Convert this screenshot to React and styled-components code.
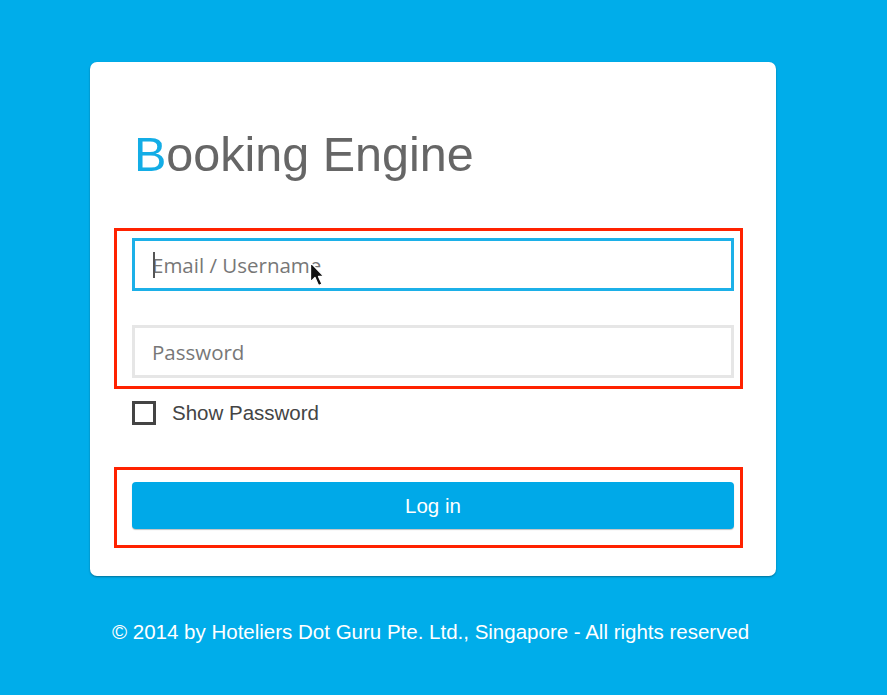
import React, { useState } from 'react';
import styled, { createGlobalStyle } from 'styled-components';

const GlobalStyle = createGlobalStyle`
  html, body {
    margin: 0;
    padding: 0;
    background: #00adea;
  }
  body {
    font-family: "Liberation Sans", Arial, sans-serif;
  }
`;

const Page = styled.div`
  width: 887px;
  height: 695px;
  padding-top: 62px;
  box-sizing: border-box;
  background: #00adea;
  overflow: hidden;
`;

const Card = styled.div`
  width: 686px;
  height: 514px;
  margin-left: 90px;
  box-sizing: border-box;
  padding: 0 43px 0 42px;
  background: #fff;
  border-radius: 7px;
  box-shadow: 0 1px 2px rgba(0, 0, 0, 0.35);
  display: flex;
  flex-direction: column;
`;

const Title = styled.h1`
  margin: 64px 0 0 2px;
  font-size: 48.5px;
  line-height: 56px;
  font-weight: normal;
  color: #666;
  span {
    color: #13ade6;
  }
`;

const Marker = styled.div`
  margin: ${p => p.$top}px -10px 0 -18px;
  border: 3px solid #ff2200;
  padding: ${p => p.$pad};
  display: flex;
  flex-direction: column;
  gap: ${p => p.$gap || 0}px;
`;

const Field = styled.div`
  position: relative;
  height: 53px;
  box-sizing: border-box;
  border: 3px solid ${p => (p.$focused ? '#1cb0e8' : '#e6e6e6')};
  display: flex;
  align-items: center;
  padding-left: 17px;
`;

const Input = styled.input`
  border: none;
  outline: none;
  background: transparent;
  width: 100%;
  height: 100%;
  padding: 0;
  font-family: "Open Sans", sans-serif;
  font-size: 20.5px;
  color: #333;
  caret-color: #333;
  &::placeholder {
    color: #777;
  }
`;

const Caret = styled.span`
  position: absolute;
  left: 18px;
  top: 11px;
  width: 2px;
  height: 26px;
  background: #555;
`;

const Pointer = styled.svg`
  position: absolute;
  left: 174px;
  top: 20px;
  width: 16px;
  height: 27px;
`;

const CheckRow = styled.label`
  display: flex;
  align-items: center;
  gap: 16px;
  margin-top: 12px;
  font-size: 20.5px;
  color: #444;
  cursor: pointer;
`;

const Box = styled.span`
  width: 24px;
  height: 24px;
  box-sizing: border-box;
  border: 3px solid #444;
  display: inline-flex;
  align-items: center;
  justify-content: center;
  font-size: 16px;
  line-height: 1;
`;

const Button = styled.button`
  height: 47px;
  border: none;
  border-radius: 4px;
  background: #00a9e8;
  box-shadow: 0 1px 1px rgba(0, 0, 0, 0.25);
  color: #fff;
  font-family: "Liberation Sans", Arial, sans-serif;
  font-size: 20.5px;
  cursor: pointer;
`;

const Footer = styled.p`
  margin: 44px 0 0 112px;
  font-size: 20.5px;
  color: #fff;
`;

export default function App() {
  const [show, setShow] = useState(false);
  return (
    <Page>
      <GlobalStyle />
      <Card>
        <Title>
          <span>B</span>ooking Engine
        </Title>
        <Marker $top={46} $pad="7px 6px 8px 15px" $gap={34}>
          <Field $focused>
            <Caret />
            <Input type="text" placeholder="Email / Username" />
            <Pointer viewBox="0 0 16 27">
              <path
                d="M1.5 1.5 L1.5 21 L6 16.5 L9.5 24.5 L13 23 L9.5 15.5 L15 15.5 Z"
                fill="#111"
                stroke="#fff"
                strokeWidth="1.3"
                strokeLinejoin="round"
              />
            </Pointer>
          </Field>
          <Field>
            <Input type={show ? 'text' : 'password'} placeholder="Password" />
          </Field>
        </Marker>
        <CheckRow onClick={() => setShow(!show)}>
          <Box>{show ? '✓' : ''}</Box>
          Show Password
        </CheckRow>
        <Marker $top={42} $pad="12px 6px 16px 15px">
          <Button>Log in</Button>
        </Marker>
      </Card>
      <Footer>© 2014 by Hoteliers Dot Guru Pte. Ltd., Singapore - All rights reserved</Footer>
    </Page>
  );
}
